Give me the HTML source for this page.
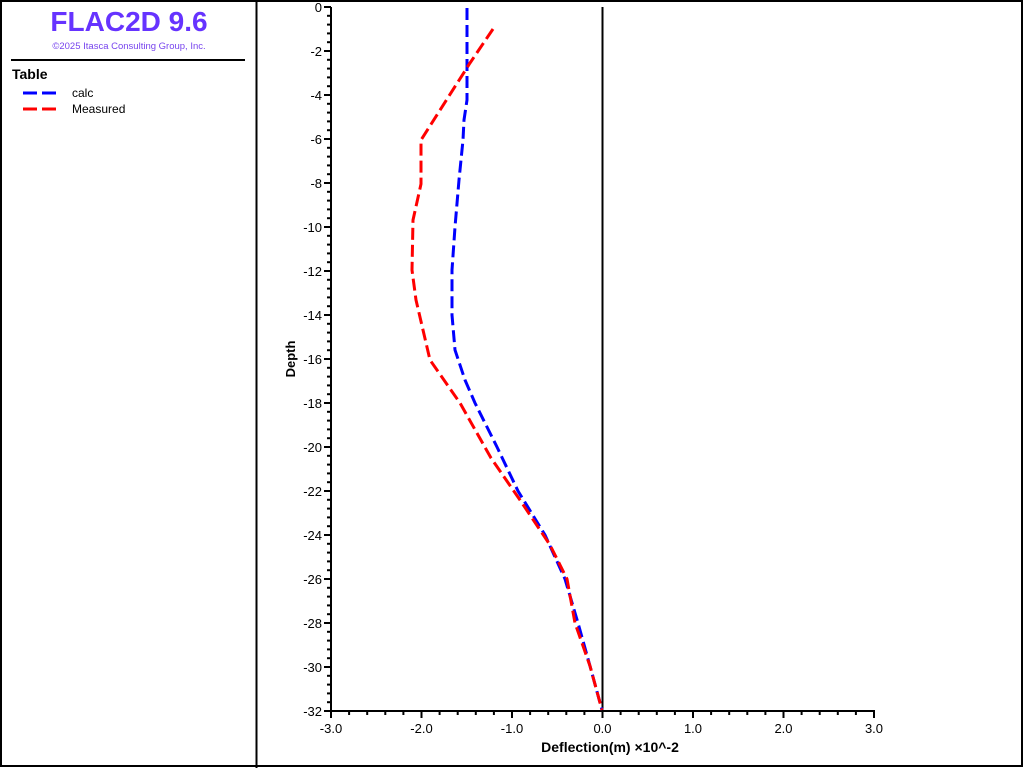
<!DOCTYPE html>
<html><head><meta charset="utf-8"><style>
html,body{margin:0;padding:0;background:#fff;}
body{width:1024px;height:768px;overflow:hidden;font-family:"Liberation Sans",sans-serif;}
</style></head><body>
<svg width="1024" height="768" xmlns="http://www.w3.org/2000/svg" font-family="Liberation Sans, sans-serif">
<rect x="1" y="1" width="1021" height="765" fill="#fff" stroke="#000" stroke-width="2"/>
<line x1="256.5" y1="0" x2="256.5" y2="768" stroke="#000" stroke-width="2"/>
<text x="129" y="31" text-anchor="middle" font-size="28" font-weight="bold" fill="#6633ff">FLAC2D 9.6</text>
<text x="129" y="49" text-anchor="middle" font-size="9.5" fill="#7744ee">©2025 Itasca Consulting Group, Inc.</text>
<line x1="11" y1="60" x2="245" y2="60" stroke="#000" stroke-width="2"/>
<text x="12" y="79" font-size="14" font-weight="bold">Table</text>
<line x1="23" y1="93" x2="56" y2="93" stroke="#0000ff" stroke-width="3" stroke-dasharray="14,5"/>
<text x="72" y="97" font-size="12">calc</text>
<line x1="23" y1="109" x2="56" y2="109" stroke="#ff0000" stroke-width="3" stroke-dasharray="14,5"/>
<text x="72" y="113" font-size="12">Measured</text>
<g stroke="#000" stroke-width="2">
<line x1="331" y1="7" x2="331" y2="711"/>
<line x1="330" y1="711" x2="875" y2="711"/>
<line x1="602.5" y1="7" x2="602.5" y2="711"/>
</g>
<g id="yt" stroke="#000" stroke-width="2"></g>
<g id="xt" stroke="#000" stroke-width="2"></g>
<g id="yl" font-size="13" text-anchor="end"></g>
<g id="xl" font-size="13" text-anchor="middle"></g>
<text x="295" y="359" font-size="13" font-weight="bold" transform="rotate(-90 295 359)" text-anchor="middle">Depth</text>
<text x="610" y="752" font-size="14" font-weight="bold" text-anchor="middle">Deflection(m)  ×10^-2</text>
<polyline fill="none" stroke="#0000ff" stroke-width="3" stroke-dasharray="12,5" points="467,8 467,100 464,120 463,140 459,180 455,227 452,270 452,315 455,350 465,380 475,403 497,447 518,491 545,535 565,579 578,623 590,666 602,710"/>
<polyline fill="none" stroke="#ff0000" stroke-width="3" stroke-dasharray="12,5" points="493,29 470,63 421,140 421,184 413,220 412,270 416,300 430,360 460,403 491,458 520,500 550,545 567,579 575,623 590,666 602,710"/>
<script>
var ns="http://www.w3.org/2000/svg";
function L(g,a){var e=document.createElementNS(ns,"line");for(var k in a)e.setAttribute(k,a[k]);document.getElementById(g).appendChild(e);}
function T(g,x,y,s){var e=document.createElementNS(ns,"text");e.setAttribute("x",x);e.setAttribute("y",y);e.textContent=s;document.getElementById(g).appendChild(e);}
for(var i=0;i<=80;i++){var y=7+i*704/80;var maj=(i%5==0);L("yt",{x1:331-(maj?7:4),y1:y,x2:331,y2:y});if(maj){var v=-i*0.4;T("yl",322,y+5,v==0?"0":String(Math.round(v)));}}
for(var i=0;i<=30;i++){var x=331+i*543/30;var maj=(i%5==0);L("xt",{x1:x,y1:711,x2:x,y2:711+(maj?7:4)});if(maj){var v=-3+i*0.2;T("xl",x,733,(v<-0.01?"-":"")+Math.abs(v).toFixed(1));}}
</script>
</svg>
</body></html>
